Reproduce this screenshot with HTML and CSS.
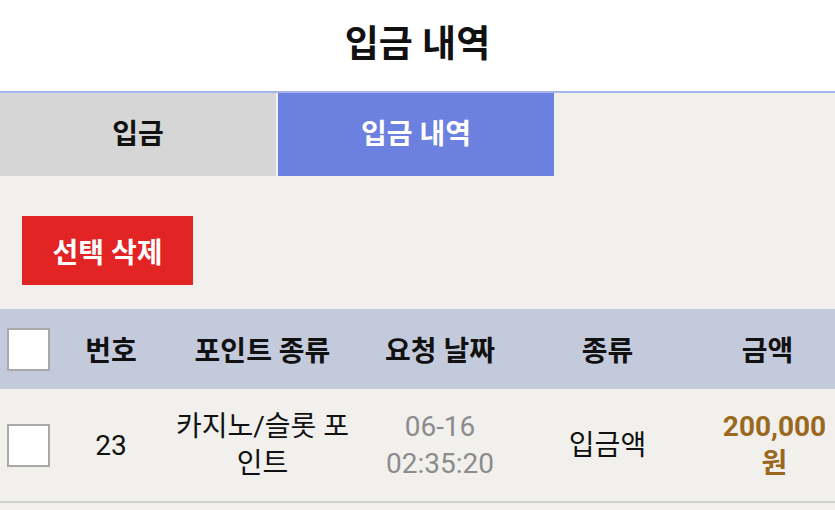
FILE: index.html
```html
<!DOCTYPE html>
<html>
<head>
    <title>입금 내역</title>
    <link rel="stylesheet" href="styles.css">
</head>
<body>
    <div class="header">
        <h1>입금 내역</h1>
    </div>

    <div class="tabs">
        <div class="tab">입금</div>
        <div class="tab active">입금 내역</div>
    </div>

    <div class="actions">
        <button class="btn-delete">선택 삭제</button>
    </div>

    <table class="history">
        <colgroup>
            <col class="c-check">
            <col class="c-no">
            <col class="c-point">
            <col class="c-date">
            <col class="c-type">
            <col class="c-amount">
        </colgroup>
        <thead>
            <tr>
                <th><span class="check"></span></th>
                <th>번호</th>
                <th>포인트 종류</th>
                <th>요청 날짜</th>
                <th>종류</th>
                <th>금액</th>
            </tr>
        </thead>
        <tbody>
            <tr>
                <td><span class="check"></span></td>
                <td>23</td>
                <td class="point">카지노/슬롯 포인트</td>
                <td class="date">06-16<br>02:35:20</td>
                <td>입금액</td>
                <td class="amount">200,000 원</td>
            </tr>
        </tbody>
    </table>
</body>
</html>
```

FILE: styles.css
```css
body {
    margin: 0;
    background: #f1f0ec;
    font-family: Roboto, "Noto Sans CJK KR", sans-serif;
    color: #111;
}
.header {
    background: white;
    height: 93px;
    box-sizing: border-box;
    padding-bottom: 10px;
    display: flex;
    align-items: center;
    justify-content: center;
    border-bottom: 2px solid #a7b6ee;
}
.header h1 {
    margin: 0;
    font-size: 37px;
    font-weight: bold;
}
.tabs {
    display: flex;
    height: 83px;
}
.tab {
    width: 278px;
    box-sizing: border-box;
    padding-bottom: 6px;
    display: flex;
    align-items: center;
    justify-content: center;
    background: #d6d6d6;
    font-size: 28px;
    font-weight: bold;
    border-right: 2px solid #f4f4f4;
}
.tab.active {
    width: 276px;
    background: #6b80df;
    color: white;
    border-right: none;
}
.actions {
    padding: 40px 22px 24px;
}
.btn-delete {
    width: 171px;
    height: 69px;
    background: #e32424;
    color: white;
    border: none;
    font-family: inherit;
    font-size: 28px;
    font-weight: bold;
}
.history {
    width: 100%;
    border-collapse: collapse;
    table-layout: fixed;
}
.c-check { width: 62px; }
.c-no { width: 98px; }
.c-point { width: 205px; }
.c-date { width: 150px; }
.c-type { width: 185px; }
.c-amount { width: 135px; }
.history th {
    background: #c3cadc;
    height: 80px;
    padding: 0;
    font-size: 28px;
    font-weight: bold;
    text-align: center;
}
.history td {
    height: 112px;
    padding: 0;
    font-size: 28px;
    text-align: center;
    line-height: 37px;
    border-bottom: 2px solid #d0d0d0;
}
.history th:first-child,
.history td:first-child {
    text-align: left;
    padding-left: 7px;
}
.check {
    display: block;
    width: 39px;
    height: 39px;
    background: white;
    border: 2px solid #a9a9a9;
}
.point {
    padding: 0 10px !important;
    word-break: break-all;
}
.date {
    color: #8c8c8c;
}
.amount {
    color: #9a6820;
    font-weight: bold;
    padding-left: 14px !important;
}
```
